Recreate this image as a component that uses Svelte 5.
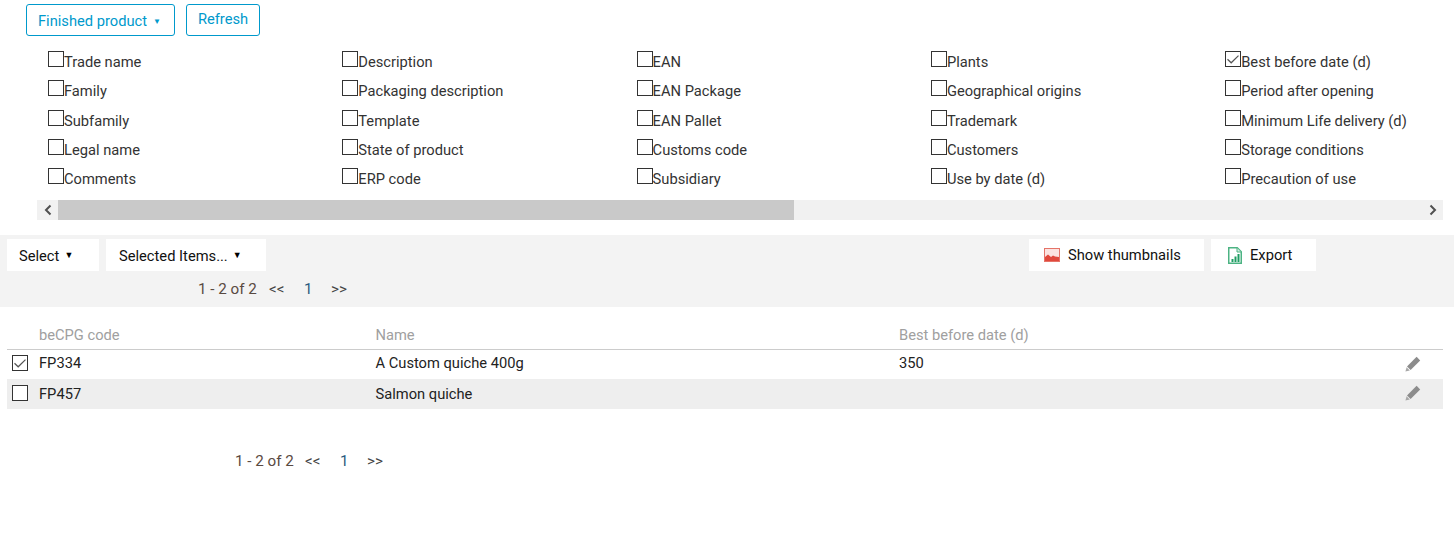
<script>
  const cols = [
    ['Trade name','Family','Subfamily','Legal name','Comments'],
    ['Description','Packaging description','Template','State of product','ERP code'],
    ['EAN','EAN Package','EAN Pallet','Customs code','Subsidiary'],
    ['Plants','Geographical origins','Trademark','Customers','Use by date (d)'],
    ['Best before date (d)','Period after opening','Minimum Life delivery (d)','Storage conditions','Precaution of use']
  ];
  const rows = [
    { code: 'FP334', name: 'A Custom quiche 400g', bb: '350', checked: true },
    { code: 'FP457', name: 'Salmon quiche', bb: '', checked: false }
  ];
</script>

{#snippet pager()}
  <span class="count">1 - 2 of 2</span><span class="nav">&lt;&lt;</span><span class="pg">1</span><span class="nav">&gt;&gt;</span>
{/snippet}

{#snippet tick()}
  <svg class="tick" viewBox="0 0 16 16" width="16" height="16"><path d="M2.5 8.2 6.2 11.8 13.5 4.6" fill="none" stroke="#555" stroke-width="1.2"/></svg>
{/snippet}

<div class="page">
  <div class="top">
    <button class="blue first">Finished product<span class="caret small">▼</span></button>
    <button class="blue second">Refresh</button>
  </div>

  <div class="fields">
    {#each cols as col}
      <div class="col">
        {#each col as label}
          <div class="field">
            <span class="box">{#if label === 'Best before date (d)'}{@render tick()}{/if}</span><span class="lbl">{label}</span>
          </div>
        {/each}
      </div>
    {/each}
  </div>

  <div class="scrollbar">
    <span class="arrow"><svg viewBox="0 0 10 12" width="10" height="12"><path d="M7.5 1.5 3 6l4.5 4.5" fill="none" stroke="#505050" stroke-width="2"/></svg></span>
    <div class="track"><div class="thumb"></div></div>
    <span class="arrow"><svg viewBox="0 0 10 12" width="10" height="12"><path d="M2.5 1.5 7 6l-4.5 4.5" fill="none" stroke="#505050" stroke-width="2"/></svg></span>
  </div>

  <div class="toolbar">
    <div class="tools">
      <button class="tool sel">Select<span class="caret">▼</span></button>
      <button class="tool items">Selected Items...<span class="caret">▼</span></button>
      <button class="tool thumbs">
        <svg viewBox="0 0 16 14" width="16" height="14"><rect x="0.5" y="0.5" width="15" height="13" fill="#fbe3e0" stroke="#e57368"/><path d="M1 13V9l3-2.5L7 9l2-1.5 2 1 4 .5v4z" fill="#e0483c"/></svg>
        <span>Show thumbnails</span>
      </button>
      <button class="tool export">
        <svg viewBox="0 0 14 17" width="14" height="17"><path d="M.75.75h8.5l4 4v11.5H.75z" fill="#fff" stroke="#4cb383" stroke-width="1.5"/><path d="M9 1v4h4" fill="#d5efe2" stroke="#4cb383"/><path d="M3.5 12h2v3h-2zM6.5 9.5h2V15h-2zM9.5 7h2v8h-2z" fill="#1f9d63"/></svg>
        <span>Export</span>
      </button>
    </div>
    <div class="pager upper">{@render pager()}</div>
  </div>

  <div class="table">
    <div class="row head">
      <span class="c0"></span><span class="c1">beCPG code</span><span class="c2">Name</span><span class="c3">Best before date (d)</span>
    </div>
    {#each rows as r}
      <div class="row body" class:alt={!r.checked}>
        <span class="c0"><span class="box rowbox">{#if r.checked}{@render tick()}{/if}</span></span>
        <span class="c1">{r.code}</span><span class="c2">{r.name}</span><span class="c3">{r.bb}</span>
        <svg class="pencil" viewBox="0 0 16 16" width="16" height="16"><path d="M11.6.8 15.2 4.4 5.6 14 2 10.4z" fill="#8c8c8c"/><path d="M1.6 11.2 4.8 14.4.4 15.6z" fill="#a8a8a8"/></svg>
      </div>
    {/each}
  </div>

  <div class="pager lower">{@render pager()}</div>
</div>

<style>
  :global(body) { margin: 0; background: #fff; }
  .page { font-family: Roboto, "Liberation Sans", sans-serif; font-size: 14.7px; color: #333; height: 548px; overflow: hidden; }
  button { font: inherit; cursor: pointer; }

  .top { display: flex; gap: 11px; padding: 4px 0 0 26px; height: 32px; }
  .blue { background: #fff; border: 1px solid #0099cc; border-radius: 3px; color: #0099cc; height: 32px; padding: 0; }
  .first { width: 149px; padding: 1px 0 0 11px; text-align: left; }
  .second { width: 74px; padding-bottom: 2px; }
  .caret { font-size: 9px; margin-left: 5px; vertical-align: 2px; display: inline-block; color: #000; position: relative; top: -1px; }
  .small { margin-left: 6px; font-size: 8px; color: inherit; top: 0; }

  .fields { display: flex; margin: 15px 0 0 48px; width: 1395px; overflow: hidden; }
  .col { flex: 0 0 294.3px; }
  .field { height: 29.25px; display: flex; align-items: flex-start; line-height: 20px; white-space: nowrap; }
  .box { box-sizing: border-box; width: 16px; height: 16px; border: 1px solid #333; background: #fff; display: block; flex: none; position: relative; }
  .lbl { padding-top: 1px; line-height: 20px; }
  .tick { position: absolute; left: -1px; top: -1px; }

  .scrollbar { display: flex; height: 20px; margin: 2.75px 12px 0 37px; background: #f1f1f1; }
  .arrow { width: 21px; display: flex; align-items: center; justify-content: center; }
  .track { flex: 1; }
  .thumb { width: 736px; height: 20px; background: #c9c9c9; }

  .toolbar { margin: 15px 1px 0 0; height: 72px; background: #f3f3f3; box-sizing: border-box; padding: 4px 0 0 7px; }
  .tools { display: flex; height: 32px; }
  .tool { background: #fff; border: 0; height: 32px; padding: 0; color: #111; display: flex; align-items: center; }
  .sel { width: 92px; padding: 1px 0 0 12px; }
  .items { width: 160px; margin-left: 7px; padding: 1px 0 0 13px; }
  .thumbs { width: 175px; margin-left: 763px; gap: 8px; padding-left: 15px; box-sizing: border-box; }
  .export { width: 105px; margin-left: 7px; gap: 8px; padding-left: 17px; box-sizing: border-box; }
  .sel, .items { box-sizing: border-box; }

  .pager { display: flex; align-items: center; color: #333; height: 20px; font-size: 15.2px; }
  .upper { margin: 8px 0 0 191px; }
  .lower { margin: 42px 0 0 235px; }
  .count { color: #5a4a42; width: 59px; white-space: nowrap; }
  .nav { color: #444; margin-left: 12px; width: 17px; }
  .pg { color: #2a5a80; margin: 0 7px 0 18px; width: 8px; }
  .lower .nav { margin-left: 11px; }
  .lower .pg { margin: 0 8px 0 18px; }

  .table { margin: 14px 12px 0 7px; }
  .row { position: relative; display: flex; align-items: center; }
  .head { height: 28px; color: #a0a0a0; border-bottom: 1px solid #ccc; }
  .body { height: 29px; color: #222; padding-bottom: 4px; box-sizing: border-box; }
  .alt { background: #eee; height: 30px; padding-bottom: 0; }
  .c0 { width: 32px; flex: none; padding-left: 5px; box-sizing: border-box; }
  .c1 { width: 336.5px; flex: none; }
  .c2 { width: 523.5px; flex: none; }
  .rowbox { top: 0; }
  .alt .rowbox { top: -1px; }
  .pencil { position: absolute; right: 22px; top: 6px; }
</style>
